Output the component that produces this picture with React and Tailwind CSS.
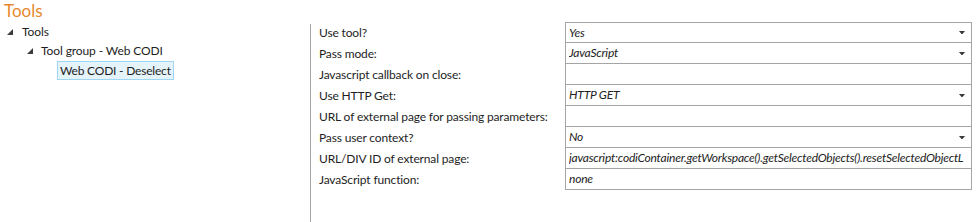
import React from "react"

const rows = [
  { label: "Use tool?", value: "Yes", select: true },
  { label: "Pass mode:", value: "JavaScript", select: true },
  { label: "Javascript callback on close:", value: "" },
  { label: "Use HTTP Get:", value: "HTTP GET", select: true },
  { label: "URL of external page for passing parameters:", value: "" },
  { label: "Pass user context?", value: "No", select: true },
  { label: "URL/DIV ID of external page:", value: "javascript:codiContainer.getWorkspace().getSelectedObjects().resetSelectedObjectL" },
  { label: "JavaScript function:", value: "none" },
]

function Caret({ className }) {
  return (
    <svg width="6" height="3" viewBox="0 0 6 3" className={className}>
      <path d="M0 0 L6 0 L3.5 3 L2.5 3 Z" fill="#3a3a3a" />
    </svg>
  )
}

function TreeArrow() {
  return (
    <svg width="6" height="6" viewBox="0 0 6 6" className="shrink-0">
      <path d="M6 0 L6 6 L0 6 Z" fill="#3c3c3c" />
    </svg>
  )
}

export default function App() {
  return (
    <div
      className="w-[976px] h-[222px] bg-white overflow-hidden text-[12px] tracking-[-0.1px] text-[#1e1e1e]"
      style={{ fontFamily: "Lato, 'Open Sans', sans-serif" }}
    >
      <div className="pl-[4px] h-[22px] text-[17px] leading-[22px] tracking-normal text-[#e8892f]">Tools</div>
      <div className="flex h-[200px]">
        <div className="w-[310px] shrink-0">
          <div className="flex items-center h-[19px] pl-[7px] gap-[9px]">
            <TreeArrow />
            <span>Tools</span>
          </div>
          <div className="flex items-center h-[19px] pl-[27px] gap-[8px]">
            <TreeArrow />
            <span>Tool group - Web CODI</span>
          </div>
          <div className="flex items-center h-[21px] pl-[57px]">
            <span className="px-[2px] h-[19px] leading-[17px] border border-[#9fd5f5] bg-[#e5f3fb] whitespace-nowrap tracking-[-0.2px]">
              Web CODI - Deselect
            </span>
          </div>
        </div>
        <div className="w-px bg-[#a5a5a5] mt-[2px]" />
        <div className="flex-1 pl-[8px]">
          {rows.map((r, i) => (
            <div key={i} className="flex h-[21px]">
              <div className="w-[246px] shrink-0 leading-[21px] whitespace-nowrap tracking-[-0.15px]">
                {r.label}
              </div>
              <div
                className={
                  "w-[407px] flex items-center pl-[3px] pr-[6px] border-l border-r border-b border-[#a5a5a5] " +
                  (i === 0 ? "border-t " : "")
                }
              >
                <span className="flex-1 italic whitespace-nowrap overflow-hidden tracking-[-0.22px] text-[#222]">
                  {r.value}
                </span>
                {r.select && <Caret className="shrink-0 ml-1" />}
              </div>
            </div>
          ))}
        </div>
      </div>
    </div>
  )
}
